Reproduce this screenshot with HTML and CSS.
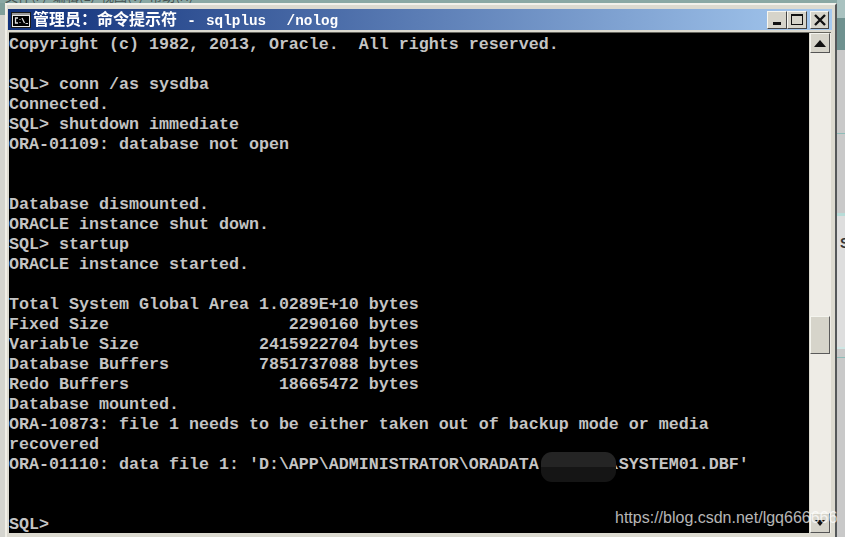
FILE: index.html
```html
<!DOCTYPE html>
<html lang="zh">
<head>
<meta charset="utf-8">
<title>命令提示符</title>
<link rel="stylesheet" href="styles.css">
</head>
<body>
<div class="desk">
  <div class="menu"><span class="menutext">文件(F)  编辑(E)  视图(V)  帮助(H)</span></div>
  <div class="leftedge"></div>
  <div class="window">
    <div class="titlebar">
      <svg class="appicon" width="20" height="16" viewBox="0 0 20 16"><rect x="0.5" y="0.5" width="19" height="15" fill="#e8e8e4" stroke="#1a1a1a"/><rect x="1" y="1" width="18" height="2" fill="#9a9a9a"/><rect x="2" y="4" width="16" height="10" fill="#000"/><path d="M7 6H4.500V11H7" fill="none" stroke="#ddd" stroke-width="1.300"/><path d="M9 7V8M9 10V11" stroke="#ddd"/><path d="M11 6 13.500 11" stroke="#ddd" stroke-width="1.200"/><path d="M14.500 11.500H17" stroke="#ccc"/></svg>
      <span class="title"><span class="cjk">管理员：命令提示符</span> - sqlplus  /nolog</span>
      <div class="controls">
        <button class="ctl"><span class="min"></span></button>
        <button class="ctl"><span class="max"></span></button>
        <button class="ctl close"><svg width="14" height="14" viewBox="0 0 14 14"><path d="M2 2 12 12M12 2 2 12" stroke="#111" stroke-width="2.400"/></svg></button>
      </div>
    </div>
    <div class="body">
      <pre class="console">Copyright (c) 1982, 2013, Oracle.  All rights reserved.

SQL&gt; conn /as sysdba
Connected.
SQL&gt; shutdown immediate
ORA-01109: database not open


Database dismounted.
ORACLE instance shut down.
SQL&gt; startup
ORACLE instance started.

Total System Global Area 1.0289E+10 bytes
Fixed Size                  2290160 bytes
Variable Size            2415922704 bytes
Database Buffers         7851737088 bytes
Redo Buffers               18665472 bytes
Database mounted.
ORA-10873: file 1 needs to be either taken out of backup mode or media
recovered
ORA-01110: data file 1: 'D:\APP\ADMINISTRATOR\ORADATA<span class="hidden-name"><span class="smudge"></span></span>\SYSTEM01.DBF'


SQL&gt;</pre>
      <div class="scrollbar">
        <div class="arrow"><svg width="12" height="7" viewBox="0 0 12 7"><path d="M6 0 12 7H0Z" fill="#111"/></svg></div>
        <div class="track">
          <div class="gap"></div>
          <div class="thumb"></div>
        </div>
        <div class="arrow"><svg width="10" height="6" viewBox="0 0 10 6"><path d="M5 6 10 0H0Z" fill="#111"/></svg></div>
      </div>
    </div>
    <div class="watermark">https://blog.csdn.net/lgq666666</div>
  </div>
  <div class="outside"><span class="glyph">S</span></div>
</div>
</body>
</html>
```

FILE: styles.css
```css
* { box-sizing: border-box; }
html, body { margin: 0; padding: 0; }
body { width: 845px; height: 537px; overflow: hidden; background: #e6e6de; }
.desk {
  display: grid;
  grid-template-columns: 5px 832px 8px;
  grid-template-rows: 3px 534px;
  height: 537px;
}
.menu {
  grid-column: 1 / 3;
  overflow: hidden;
  background: #8aa8a4;
  padding-left: 5px;
}
.menutext {
  display: block;
  margin-top: -11px;
  color: #44504e;
  font: 13px/14px "Noto Sans CJK SC", sans-serif;
  white-space: pre;
}
.leftedge { background: linear-gradient(#7f9f9a 0 12px, #d4d4ce 12px); }
.window {
  position: relative;
  height: 534px;
  padding: 4px 3px 0 2px;
  background: #dcdad0;
  border-top: 2px solid #f2f2ec;
  border-right: 2px solid #55585a;
  border-left: 2px solid #f0eee6;
}
.outside {
  grid-column: 3;
  grid-row: 1 / 3;
  position: relative;
  overflow: hidden;
  background: linear-gradient(
    #a9c2c0 0 18px, #6f918f 18px 50px, #c9c9c9 50px 133px, #8fbcb8 133px 134px,
    #c9c9c9 134px 213px, #b8dcd8 213px 216px, #dedede 216px 347px, #cfe6e4 347px 349px,
    #c9c9c9 349px 357px, #8fbcb8 357px 358px, #c9c9c9 358px);
}
.glyph {
  position: absolute;
  left: 3px;
  top: 234px;
  color: #333;
  font: bold 14px/18px "Liberation Sans", sans-serif;
}
.titlebar {
  display: flex;
  align-items: center;
  height: 21px;
  margin-left: -1px;
  padding: 0 3px 0 3px;
  background: linear-gradient(90deg, #10307a 0%, #a6caf0 100%);
}
.appicon { flex: none; margin-right: 2px; filter: blur(.3px); }
.title {
  flex: 1;
  white-space: pre;
  color: #fff;
  font: bold 14.33px/20px "Liberation Mono", monospace;
  word-spacing: 1.6px;
  overflow: hidden;
  filter: blur(.3px);
}
.cjk { font: bold 16px/20px "Noto Sans CJK SC", sans-serif; }
.controls { display: flex; align-items: center; }
.ctl {
  display: flex;
  align-items: center;
  justify-content: center;
  width: 20px;
  height: 18px;
  padding: 0;
  background: #d6d4ca;
  border: 1px solid;
  border-color: #f6f6f0 #444 #444 #f6f6f0;
}
.close { width: 19px; margin-left: 3px; }
.min { width: 8px; height: 3px; background: #111; margin-top: 7px; }
.max { width: 12px; height: 11px; border: 1px solid #111; border-top-width: 2px; }
.body {
  display: flex;
  width: 822px;
  height: 500px;
  margin-top: 3px;
  box-shadow: 0 -1px 0 #66665f;
}
.console {
  flex: none;
  width: 800px;
  height: 500px;
  margin: 0;
  padding: 2px 0 0 0;
  overflow: hidden;
  background: #000;
  color: #c4c4c4;
  font: bold 16.67px/20px "Liberation Mono", monospace;
}
.hidden-name {
  position: relative;
  display: inline-block;
  width: 70px;
  height: 1px;
}
.smudge {
  position: absolute;
  z-index: 1;
  left: 2px;
  top: -16px;
  width: 75px;
  height: 30px;
  border-radius: 11px;
  background: linear-gradient(#242424 0 50%, #151515 50%);
}
.scrollbar {
  flex: none;
  width: 21px;
  margin-left: 1px;
  display: flex;
  flex-direction: column;
  background-color: #eeece6;
  background-image: radial-gradient(#d4d2ca 40%, transparent 45%);
  background-size: 2px 2px;
}
.arrow {
  flex: none;
  width: 20px;
  height: 20px;
  display: flex;
  align-items: center;
  justify-content: center;
  background: #d6d4ca;
  border: 1px solid;
  border-color: #f4f4ee #555 #555 #f4f4ee;
}
.track { flex: 1; display: flex; flex-direction: column; }
.gap { height: 263px; }
.thumb {
  width: 20px;
  height: 38px;
  background: #d6d4ca;
  border: 1px solid;
  border-color: #f4f4ee #5a5a5a #5a5a5a #f4f4ee;
}
.watermark {
  position: absolute;
  z-index: 2;
  left: 608px;
  bottom: 9px;
  color: rgba(255, 255, 255, .72);
  font: 16px/20px "Liberation Sans", sans-serif;
  white-space: nowrap;
}
```
